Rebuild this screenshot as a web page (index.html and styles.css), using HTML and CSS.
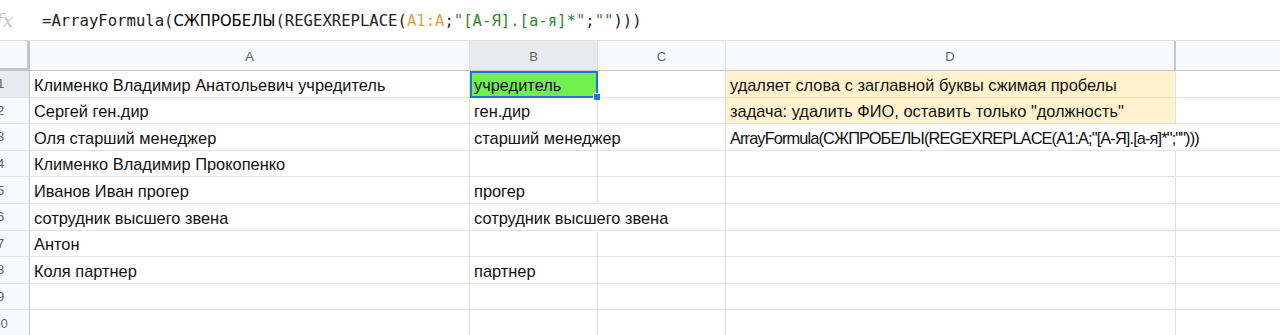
FILE: index.html
```html
<!DOCTYPE html>
<html lang="ru">
<head>
    <meta charset="UTF-8">
    <title>Таблица</title>
    <link rel="stylesheet" href="styles.css">
</head>
<body>
    <div class="formula-bar">
        <span class="fx">fx</span>
        <span class="formula">=ArrayFormula(<span class="fn">СЖПРОБЕЛЫ</span>(REGEXREPLACE(<span class="ref">A1:A</span>;<span class="str">"[А-Я].[а-я]*"</span>;<span class="str">""</span>)))</span>
    </div>

    <div class="sheet">
        <div class="grid">
            <div class="corner"></div>
            <div class="col-head">A</div>
            <div class="col-head active">B</div>
            <div class="col-head">C</div>
            <div class="col-head dark">D</div>
            <div class="col-head"></div>

            <div class="row-head active">1</div>
            <div class="cell">Клименко Владимир Анатольевич учредитель</div>
            <div class="cell green selected">учредитель<span class="handle"></span></div>
            <div class="cell"></div>
            <div class="cell note">удаляет слова с заглавной буквы сжимая пробелы</div>
            <div class="cell"></div>

            <div class="row-head">2</div>
            <div class="cell">Сергей ген.дир</div>
            <div class="cell">ген.дир</div>
            <div class="cell"></div>
            <div class="cell note">задача: удалить ФИО, оставить только "должность"</div>
            <div class="cell"></div>

            <div class="row-head">3</div>
            <div class="cell">Оля старший менеджер</div>
            <div class="cell">старший менеджер</div>
            <div class="cell"></div>
            <div class="cell spill tight">ArrayFormula(СЖПРОБЕЛЫ(REGEXREPLACE(A1:A;"[А-Я].[а-я]*";"")))</div>
            <div class="cell"></div>

            <div class="row-head">4</div>
            <div class="cell">Клименко Владимир Прокопенко</div>
            <div class="cell"></div>
            <div class="cell"></div>
            <div class="cell"></div>
            <div class="cell"></div>

            <div class="row-head">5</div>
            <div class="cell">Иванов Иван прогер</div>
            <div class="cell">прогер</div>
            <div class="cell"></div>
            <div class="cell"></div>
            <div class="cell"></div>

            <div class="row-head">6</div>
            <div class="cell">сотрудник высшего звена</div>
            <div class="cell spill">сотрудник высшего звена</div>
            <div class="cell"></div>
            <div class="cell"></div>
            <div class="cell"></div>

            <div class="row-head">7</div>
            <div class="cell">Антон</div>
            <div class="cell"></div>
            <div class="cell"></div>
            <div class="cell"></div>
            <div class="cell"></div>

            <div class="row-head">8</div>
            <div class="cell">Коля партнер</div>
            <div class="cell">партнер</div>
            <div class="cell"></div>
            <div class="cell"></div>
            <div class="cell"></div>

            <div class="row-head">9</div>
            <div class="cell"></div>
            <div class="cell"></div>
            <div class="cell"></div>
            <div class="cell"></div>
            <div class="cell"></div>

            <div class="row-head">10</div>
            <div class="cell"></div>
            <div class="cell"></div>
            <div class="cell"></div>
            <div class="cell"></div>
            <div class="cell"></div>
        </div>
    </div>
</body>
</html>
```

FILE: styles.css
```css
body {
    margin: 0;
    padding: 0;
    background: #fff;
    font-family: "Liberation Sans", Arial, sans-serif;
    color: #000;
    overflow: hidden;
}

/* formula bar */
.formula-bar {
    height: 40px;
    display: flex;
    align-items: center;
    border-bottom: 1px solid #e1e1e1;
    margin-left: -4px;
}

.fx {
    width: 46px;
    font-family: "DejaVu Serif", serif;
    font-style: italic;
    font-size: 18px;
    color: #c4c4c4;
}

.formula {
    font-family: "DejaVu Sans Mono", monospace;
    font-size: 15.6px;
    color: #222;
    white-space: nowrap;
}

.formula .fn {
    font-family: "DejaVu Sans Condensed", "DejaVu Sans", sans-serif;
    font-stretch: condensed;
    font-size: 16.5px;
    color: #000;
}

.formula .ref {
    color: #e8a23a;
}

.formula .str {
    color: #2f8a2f;
}

/* grid */
.sheet {
    overflow: hidden;
}

.grid {
    display: grid;
    grid-template-columns: 58px 440px 128px 128px 450px 160px;
    grid-template-rows: 30px;
    grid-auto-rows: 26.6px;
    margin-left: -28px;
}

.grid > div {
    box-sizing: border-box;
    border-right: 1px solid #e2e2e2;
    border-bottom: 1px solid #e2e2e2;
}

.corner {
    background: #f8f9fa;
    border-right: 3px solid #c4c4c4 !important;
    border-bottom: 3px solid #c4c4c4 !important;
}

.col-head {
    background: #f8f9fa;
    border-bottom-color: #c4c4c4 !important;
    display: flex;
    align-items: center;
    justify-content: center;
    padding-top: 2px;
    font-size: 13px;
    color: #5f6368;
}

.col-head.dark {
    border-right: 2px solid #c8c8c8 !important;
}

.col-head.active,
.row-head.active {
    background: #e8eaed;
}

.row-head {
    background: #f8f9fa;
    border-right-color: #c4c4c4 !important;
    display: flex;
    align-items: center;
    justify-content: center;
    font-size: 13px;
    color: #5f6368;
}

.cell {
    position: relative;
    display: flex;
    align-items: flex-end;
    padding: 0 4px 2px;
    font-size: 16.4px;
    color: #111;
    white-space: nowrap;
}

.cell.spill {
    border-right-color: transparent !important;
}

.cell.tight {
    letter-spacing: -0.9px;
}

.cell.note {
    background: #fff2cc;
    border-bottom-color: #eadfc0 !important;
}

.cell.green {
    background: #6ff04d;
}

.cell.selected {
    outline: 2px solid #1a73e8;
    outline-offset: -2px;
}

.handle {
    position: absolute;
    right: -4px;
    bottom: -4px;
    width: 6px;
    height: 6px;
    background: #1a73e8;
    border: 1px solid #fff;
    z-index: 2;
}
```
